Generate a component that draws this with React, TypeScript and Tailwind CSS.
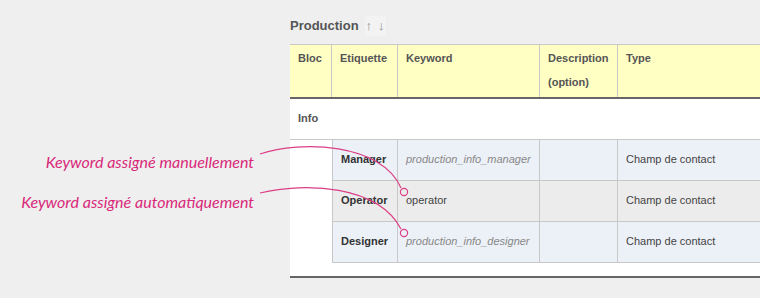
const rows = [
  { label: 'Manager', keyword: 'production_info_manager', auto: true, bg: 'bg-[#ecf0f7]' },
  { label: 'Operator', keyword: 'operator', auto: false, bg: 'bg-[#ececec]' },
  { label: 'Designer', keyword: 'production_info_designer', auto: true, bg: 'bg-[#ecf0f7]' },
]

function Annotations() {
  return (
    <svg className="pointer-events-none absolute inset-0" width="760" height="298">
      <path d="M260,154 C300,140 382,143 401,188" fill="none" stroke="#dc3f86" strokeWidth="1.2" />
      <path d="M260,193 C305,182 378,185 401,229" fill="none" stroke="#dc3f86" strokeWidth="1.2" />
      <circle cx="404" cy="192" r="3.6" fill="none" stroke="#dc3f86" strokeWidth="1.2" />
      <circle cx="404" cy="233" r="3.6" fill="none" stroke="#dc3f86" strokeWidth="1.2" />
    </svg>
  )
}

export default function App() {
  return (
    <div className="relative flex h-[298px] w-[760px] overflow-hidden bg-[#efefef] font-['Liberation_Sans',Arial,sans-serif]">
      <div className="flex w-[290px] shrink-0 flex-col items-end pr-[36px] pt-[142px] font-['Lato',sans-serif] text-[16px] italic leading-[40px] text-[#d9297a]">
        <div>Keyword assigné manuellement</div>
        <div>Keyword assigné automatiquement</div>
      </div>

      <div className="flex min-w-0 flex-1 flex-col">
        <div className="flex h-[44px] items-center gap-[6px] pt-[8px] text-[13px] font-bold text-[#555]">
          <span>Production</span>
          <span className="flex gap-[6px] bg-[#f3f3f3] px-[1px] text-[13px] font-normal text-[#8f8f8f]">
            <span>↑</span>
            <span>↓</span>
          </span>
        </div>

        <div className="bg-white text-[11px]">
          <div className="flex h-[55px] border-t border-b-2 border-t-[#c8c8c8] border-b-[#666] bg-[#ffffc4] font-bold leading-[24px] text-[#555]">
            <div className="w-[42px] shrink-0 border-r border-[#c8c8c8] pl-[8px] pt-[1px]">Bloc</div>
            <div className="w-[66px] shrink-0 border-r border-[#c8c8c8] pl-[8px] pt-[1px]">Etiquette</div>
            <div className="w-[142px] shrink-0 border-r border-[#c8c8c8] pl-[8px] pt-[1px]">Keyword</div>
            <div className="w-[78px] shrink-0 border-r border-[#c8c8c8] pl-[8px] pt-[1px]">
              Description
              <br />
              (option)
            </div>
            <div className="flex-1 pl-[8px] pt-[1px]">Type</div>
          </div>

          <div className="flex h-[41px] items-center border-b border-[#c8c8c8] pb-[2px] pl-[8px] font-bold text-[#555]">Info</div>

          {rows.map((r) => (
            <div key={r.label} className="flex h-[41px]">
              <div className="w-[42px] shrink-0" />
              <div className={`flex flex-1 border-b border-l border-[#c8c8c8] ${r.bg}`}>
                <div className="flex w-[65px] shrink-0 items-center border-r border-[#c8c8c8] pb-[1px] pl-[8px] font-bold text-[#333]">
                  {r.label}
                </div>
                <div
                  className={`flex w-[142px] shrink-0 items-center border-r border-[#c8c8c8] pb-[1px] pl-[8px] ${
                    r.auto ? 'italic text-[#888]' : 'text-[#444]'
                  }`}
                >
                  {r.keyword}
                </div>
                <div className="w-[78px] shrink-0 border-r border-[#c8c8c8]" />
                <div className="flex flex-1 items-center pb-[1px] pl-[8px] text-[#444]">Champ de contact</div>
              </div>
            </div>
          ))}

          <div className="h-[13px]" />
          <div className="h-[2px] bg-[#666]" />
        </div>
      </div>

      <Annotations />
    </div>
  )
}
